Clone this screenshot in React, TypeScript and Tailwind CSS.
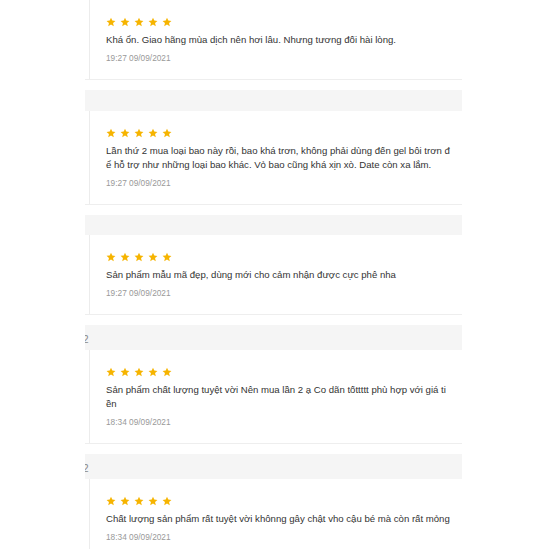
import React from 'react';

type Review = {
  text: string;
  time: string;
  band: number;
  tag?: string;
};

const reviews: Review[] = [
  { text: 'Khá ổn. Giao hãng mùa dịch nên hơi lâu. Nhưng tương đối hài lòng.', time: '19:27 09/09/2021', band: 0 },
  {
    text: 'Lần thứ 2 mua loại bao này rồi, bao khá trơn, không phải dùng đến gel bôi trơn để hỗ trợ như những loại bao khác. Vỏ bao cũng khá xịn xò. Date còn xa lắm.',
    time: '19:27 09/09/2021',
    band: 21,
  },
  { text: 'Sản phẩm mẫu mã đẹp, dùng mới cho cảm nhận được cực phê nha', time: '19:27 09/09/2021', band: 20 },
  {
    text: 'Sản phẩm chất lượng tuyệt vời Nên mua lần 2 ạ Co dãn tốttttt phù hợp với giá tiền',
    time: '18:34 09/09/2021',
    band: 25,
    tag: '2',
  },
  {
    text: 'Chất lượng sản phẩm rất tuyệt vời khônng gây chật vho cậu bé mà còn rất mỏng',
    time: '18:34 09/09/2021',
    band: 25,
    tag: '2',
  },
];

const Star = () => (
  <svg viewBox="0 0 24 24" className="w-[10px] h-[10px]" fill="#f6b400">
    <path d="M12 1.5l3.1 7.1 7.6.7-5.8 5.1 1.8 7.6L12 18l-6.7 4 1.8-7.6-5.8-5.1 7.6-.7z" />
  </svg>
);

const Band = ({ height, tag }: { height: number; tag?: string }) => (
  <div
    className="mt-[10px] bg-[#f5f5f5] overflow-hidden flex items-center pt-[4px] text-[10px] text-[#888]"
    style={{ height }}
  >
    {tag && <span className="-ml-[2px] leading-none">{tag}</span>}
  </div>
);

const App = () => {
  return (
    <div className="w-[549px] h-[549px] overflow-hidden bg-white" style={{ fontFamily: '"Liberation Sans", Arial, sans-serif' }}>
      <div className="ml-[85px] w-[377px]">
        {reviews.map((r, i) => (
          <div key={i}>
            {/* gray divider between stitched reviews */}
            {r.band > 0 && <Band height={r.band} tag={r.tag} />}
            <div className="border-b border-[#eeeeee]">
              <div className="ml-[4px] border-l border-[#ececec] pl-[16px] pr-[12px] pt-[17px] pb-[15px]">
                <div className="flex gap-[4px] h-[10px]">
                  {[0, 1, 2, 3, 4].map((s) => (
                    <Star key={s} />
                  ))}
                </div>
                <p className="mt-[6px] text-[9.6px] leading-[14px] text-[#333] break-all">{r.text}</p>
                <p className="mt-[5px] text-[8.3px] leading-[12px] text-[#999]">{r.time}</p>
              </div>
            </div>
          </div>
        ))}
      </div>
    </div>
  );
};

export default App;
